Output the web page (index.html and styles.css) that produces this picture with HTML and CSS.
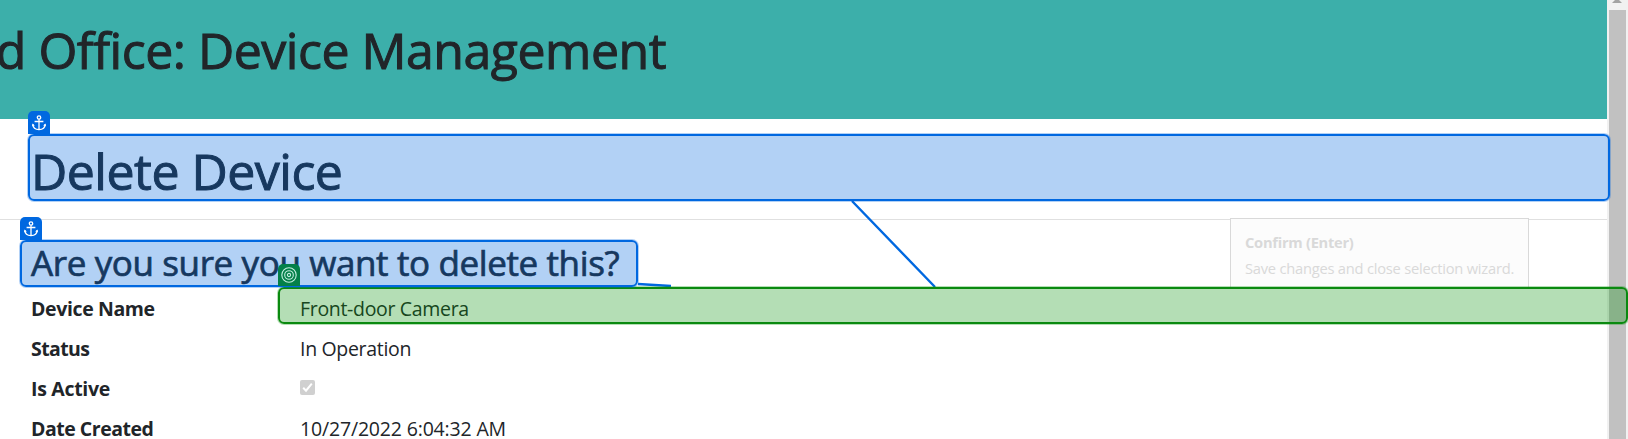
FILE: index.html
```html
<!DOCTYPE html>
<html lang="en">
<head>
<meta charset="utf-8">
<title>Device Management</title>
<link rel="stylesheet" href="styles.css">
</head>
<body>
<div class="window">
  <div class="page">
    <header class="banner"><h1 class="banner-title">d Office: Device Management</h1></header>
    <main class="content">
      <h1 class="title">Delete Device</h1>
      <hr class="rule">
      <h3 class="question">Are you sure you want to delete this?</h3>
      <dl class="details">
        <dt class="k-name">Device Name</dt><dd class="v-name">Front-door Camera</dd>
        <dt class="k-status">Status</dt><dd class="v-status">In Operation</dd>
        <dt class="k-active">Is Active</dt><dd><svg class="check" viewBox="0 0 15 15"><rect width="15" height="15" rx="2" fill="#d0d0d0"/><path d="M3.2 7.8 6 10.7 11.8 3.6" fill="none" stroke="#fff" stroke-width="2"/></svg></dd>
        <dt class="k-created">Date Created</dt><dd class="v-created">10/27/2022 6:04:32 AM</dd>
      </dl>
    </main>
  </div>
  <div class="scrollbar">
    <svg class="arrow" viewBox="0 0 10 4"><path d="M3 0H7L10 3H0Z" fill="#a3a3a3"/></svg>
    <div class="thumb"></div>
  </div>

  <div class="tooltip"><strong class="tip-title">Confirm (Enter)</strong><span class="tip-text">Save changes and close selection wizard.</span></div>

  <svg class="links" viewBox="0 0 1628 439"><path d="M852 201 935 287M638 284 671 286" fill="none" stroke="#0068e0" stroke-width="2.4"/></svg>

  <div class="mark anchor mark-title"></div>
  <div class="mark target"></div>
  <div class="mark anchor mark-question"></div>
  <div class="tab tab-title"><svg class="glyph" viewBox="0 0 14 16"><g fill="none" stroke="#fff" stroke-width="1.3"><circle cx="7" cy="2.5" r="1.7"/><path d="M7 4.2V14.6M2.6 6.5H11.4M.8 9.3C1 12.7 3.6 14.6 7 14.6S13 12.7 13.2 9.3"/></g><path d="M0 11.2.6 8.6 2.8 10.5ZM14 11.2 13.4 8.6 11.2 10.5Z" fill="#fff"/></svg></div>
  <div class="tab tab-question"><svg class="glyph" viewBox="0 0 14 16"><g fill="none" stroke="#fff" stroke-width="1.3"><circle cx="7" cy="2.5" r="1.7"/><path d="M7 4.2V14.6M2.6 6.5H11.4M.8 9.3C1 12.7 3.6 14.6 7 14.6S13 12.7 13.2 9.3"/></g><path d="M0 11.2.6 8.6 2.8 10.5ZM14 11.2 13.4 8.6 11.2 10.5Z" fill="#fff"/></svg></div>
  <div class="tab tab-target"><svg class="glyph" viewBox="0 0 16 16"><g fill="none" stroke="#c5eee0" stroke-width="1.1"><circle cx="8" cy="8" r="7.2"/><circle cx="8" cy="8" r="4.3"/><circle cx="8" cy="8" r="1.6"/></g></svg></div>
</div>
</body>
</html>
```
FILE: styles.css
```css
* { box-sizing: border-box; }
body { margin: 0; background: #fff; color: #212529; font-family: "Open Sans", "Noto Sans", sans-serif; }
.window { position: relative; display: flex; width: 1628px; height: 439px; overflow: hidden; }
.page { width: 1607px; }
.banner { height: 119px; padding-top: 20px; background: #3cafaa; }
h1, h3 { margin: 0; font-weight: 500; white-space: nowrap; }
h1 { -webkit-text-stroke: 1px currentColor; }
h3 { -webkit-text-stroke: .7px currentColor; }
.banner-title { display: flex; justify-content: flex-end; width: 666px; font-size: 50px; line-height: 60px; letter-spacing: -0.48px; }
.content { padding-top: 22px; }
.title { padding-left: 31px; font-size: 50px; line-height: 60px; letter-spacing: -0.5px; }
.rule { height: 1px; margin: 18px 0 22px; border: 0; background: #e0e0e0; }
.question { padding-left: 31px; font-size: 35px; line-height: 42px; letter-spacing: -0.38px; }
.details { display: grid; grid-template-columns: 269px 1fr; grid-auto-rows: 40px; margin: 5px 0 0; padding-left: 31px; font-size: 19.5px; line-height: 40px; white-space: nowrap; }
.details dt { font-weight: 700; }
.details dd { margin: 0; }
.k-name { letter-spacing: -.38px; }
.k-status { letter-spacing: -.6px; }
.k-active { letter-spacing: -.3px; }
.k-created { letter-spacing: -.48px; }
.v-name, .v-status { letter-spacing: -.32px; }
.v-created { letter-spacing: -.17px; }
.check { display: block; width: 15px; height: 15px; margin-top: 11px; }

.scrollbar { width: 21px; padding: 0 2px; background: #f1f1f1; }
.arrow { display: block; width: 10px; height: 4px; margin: 0 0 6px 3px; }
.thumb { height: 429px; background: #c1c1c1; }

.tooltip { position: absolute; left: 1230px; top: 218px; display: flex; flex-direction: column; width: 299px; height: 69px; padding: 10px 14px; border: 1px solid #d9d9d9; border-bottom: 0; background: #fcfcfc; color: #d9d9d9; font-size: 14.7px; line-height: 26px; white-space: nowrap; }
.tip-title { letter-spacing: -.28px; }
.tip-text { letter-spacing: -.23px; }
.links { position: absolute; left: 0; top: 0; width: 1628px; height: 439px; }
.mark { position: absolute; border-radius: 6px; }
.anchor { border: 2px solid #0068e0; background: rgba(0, 103, 223, .3); box-shadow: 0 0 0 1px rgba(0, 104, 224, .3); }
.mark-title { left: 28px; top: 134px; width: 1582px; height: 67px; }
.mark-question { left: 20px; top: 240px; width: 618px; height: 47px; }
.target { left: 278px; top: 287px; width: 1350px; height: 37px; border: 2px solid #0a8a0f; background: rgba(5, 145, 10, .3); box-shadow: 0 0 0 1px rgba(5, 145, 10, .3); }
.tab { position: absolute; display: flex; align-items: center; justify-content: center; width: 22px; height: 22px; border-radius: 5px 5px 0 0; background: #0068e0; }
.tab-title { left: 28px; top: 111px; height: 23px; }
.tab-question { left: 20px; top: 217px; height: 23px; }
.tab-target { left: 278px; top: 264px; background: #048049; }
.glyph { width: 16px; height: 16px; }
```
